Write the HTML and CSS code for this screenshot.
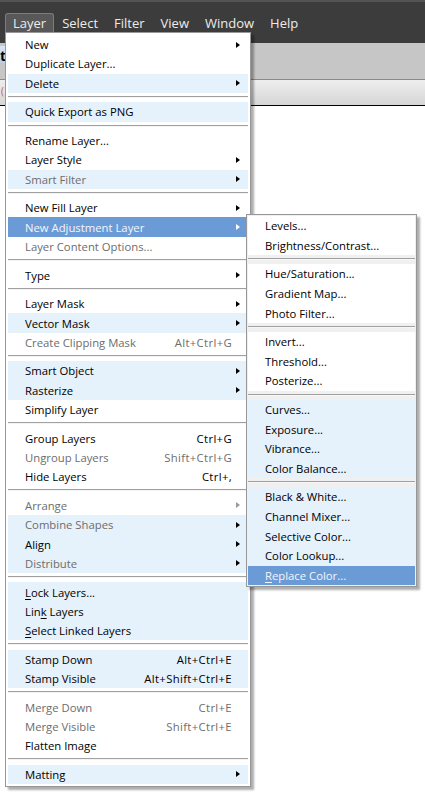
FILE: index.html
```html
<!DOCTYPE html>
<html>
<head>
<meta charset="utf-8">
<title>Layer menu</title>
<link rel="stylesheet" href="styles.css">
</head>
<body>
<div class="app">
  <div class="menubar">
    <span class="mb active">Layer</span>
    <span class="mb">Select</span>
    <span class="mb">Filter</span>
    <span class="mb">View</span>
    <span class="mb">Window</span>
    <span class="mb">Help</span>
  </div>
  <div class="docbar"><span class="doctab">t</span></div>
  <div class="optbar"><span class="optmark">(</span></div>
  <div class="canvas"></div>
</div>

<div class="menu main">
  <div class="item"><span class="label">New</span><i class="arrow"></i></div>
  <div class="item"><span class="label">Duplicate Layer...</span></div>
  <div class="item hov"><span class="label">Delete</span><i class="arrow"></i></div>
  <div class="sep"></div>
  <div class="item hov"><span class="label">Quick Export as PNG</span></div>
  <div class="sep"></div>
  <div class="item"><span class="label">Rename Layer...</span></div>
  <div class="item"><span class="label">Layer Style</span><i class="arrow"></i></div>
  <div class="item hov dis"><span class="label">Smart Filter</span><i class="arrow"></i></div>
  <div class="sep"></div>
  <div class="item"><span class="label">New Fill Layer</span><i class="arrow"></i></div>
  <div class="item sel"><span class="label">New Adjustment Layer</span><i class="arrow"></i></div>
  <div class="item dis"><span class="label">Layer Content Options...</span></div>
  <div class="sep"></div>
  <div class="item"><span class="label">Type</span><i class="arrow"></i></div>
  <div class="sep"></div>
  <div class="item"><span class="label">Layer Mask</span><i class="arrow"></i></div>
  <div class="item hov"><span class="label">Vector Mask</span><i class="arrow"></i></div>
  <div class="item dis"><span class="label">Create Clipping Mask</span><span class="key">Alt+Ctrl+G</span></div>
  <div class="sep"></div>
  <div class="item hov"><span class="label">Smart Object</span><i class="arrow"></i></div>
  <div class="item hov"><span class="label">Rasterize</span><i class="arrow"></i></div>
  <div class="item"><span class="label">Simplify Layer</span></div>
  <div class="sep"></div>
  <div class="item"><span class="label">Group Layers</span><span class="key">Ctrl+G</span></div>
  <div class="item dis"><span class="label">Ungroup Layers</span><span class="key">Shift+Ctrl+G</span></div>
  <div class="item"><span class="label">Hide Layers</span><span class="key">Ctrl+,</span></div>
  <div class="sep"></div>
  <div class="item dis"><span class="label">Arrange</span><i class="arrow dim"></i></div>
  <div class="item hov dis"><span class="label">Combine Shapes</span><i class="arrow"></i></div>
  <div class="item hov"><span class="label">Align</span><i class="arrow"></i></div>
  <div class="item hov dis"><span class="label">Distribute</span><i class="arrow"></i></div>
  <div class="sep"></div>
  <div class="item hov"><span class="label"><u>L</u>ock Layers...</span></div>
  <div class="item hov"><span class="label">Lin<u>k</u> Layers</span></div>
  <div class="item hov"><span class="label"><u>S</u>elect Linked Layers</span></div>
  <div class="sep"></div>
  <div class="item hov"><span class="label">Stamp Down</span><span class="key">Alt+Ctrl+E</span></div>
  <div class="item hov"><span class="label">Stamp Visible</span><span class="key">Alt+Shift+Ctrl+E</span></div>
  <div class="sep"></div>
  <div class="item dis"><span class="label">Merge Down</span><span class="key">Ctrl+E</span></div>
  <div class="item dis"><span class="label">Merge Visible</span><span class="key">Shift+Ctrl+E</span></div>
  <div class="item"><span class="label">Flatten Image</span></div>
  <div class="sep"></div>
  <div class="item hov"><span class="label">Matting</span><i class="arrow"></i></div>
</div>

<div class="menu sub">
  <div class="item"><span class="label">Levels...</span></div>
  <div class="item"><span class="label">Brightness/Contrast...</span></div>
  <div class="sep"></div>
  <div class="item"><span class="label">Hue/Saturation...</span></div>
  <div class="item"><span class="label">Gradient Map...</span></div>
  <div class="item"><span class="label">Photo Filter...</span></div>
  <div class="sep"></div>
  <div class="item"><span class="label">Invert...</span></div>
  <div class="item"><span class="label">Threshold...</span></div>
  <div class="item"><span class="label">Posterize...</span></div>
  <div class="sep"></div>
  <div class="item hov"><span class="label">Curves...</span></div>
  <div class="item hov"><span class="label">Exposure...</span></div>
  <div class="item hov"><span class="label">Vibrance...</span></div>
  <div class="item hov"><span class="label">Color Balance...</span></div>
  <div class="sep"></div>
  <div class="item hov"><span class="label">Black &amp; White...</span></div>
  <div class="item hov"><span class="label">Channel Mixer...</span></div>
  <div class="item hov"><span class="label">Selective Color...</span></div>
  <div class="item hov"><span class="label">Color Lookup...</span></div>
  <div class="item sel"><span class="label"><u>R</u>eplace Color...</span></div>
</div>
</body>
</html>
```

FILE: styles.css
```css
* { box-sizing: border-box; }

body {
  margin: 0;
  background: #ffffff;
  font-family: "Open Sans", "Noto Sans", sans-serif;
}

.app {
  width: 425px;
  height: 798px;
  display: flex;
  flex-direction: column;
}

.menubar {
  height: 43px;
  flex: none;
  background: #3c3c3c;
  border-top: 2px solid #545454;
  display: flex;
  align-items: flex-start;
  padding: 11px 0 0 5px;
}

.mb {
  height: 19px;
  padding: 0 7px;
  border: 1px solid transparent;
  border-bottom: none;
  border-radius: 3px 3px 0 0;
  color: #ececec;
  font-size: 13px;
  line-height: 18px;
}

.mb.active {
  background: #585858;
  border-color: #7c7c7c;
}

.docbar {
  height: 37px;
  flex: none;
  background: #c6c6c6;
  border-bottom: 1px solid #8a8a8a;
  display: flex;
  align-items: flex-start;
  padding-top: 3px;
}

.doctab {
  width: 6px;
  height: 17px;
  background: linear-gradient(#d9e6f3, #b9cfe6);
  font-size: 14px;
  font-weight: bold;
  line-height: 19px;
  color: #000;
}

.optbar {
  height: 26px;
  flex: none;
  background: linear-gradient(#eeeeee, #d6d6d6);
  border-bottom: 1px solid #000;
  padding: 5px 0 0 1px;
}

.optmark {
  display: block;
  width: 5px;
  color: #c0603a;
  font-size: 10px;
  line-height: 12px;
}

.canvas {
  flex: 1;
  background: #ffffff;
}

.menu {
  position: absolute;
  border: 1px solid #979797;
  box-shadow: 3px 3px 2px rgba(0, 0, 0, 0.32);
}

.main {
  left: 5px;
  top: 32px;
  width: 246px;
  padding: 2px;
  background: #ffffff;
  z-index: 2;
}

.sub {
  left: 246px;
  top: 214px;
  width: 171px;
  padding: 1px;
  background: #f0f0f0;
  z-index: 3;
}

.sub .item {
  background: #ffffff;
}

.item {
  height: 19.3px;
  display: flex;
  align-items: center;
  padding: 0 8px 0 17px;
  font-size: 11.3px;
  color: #000;
  white-space: nowrap;
}

.sub .item {
  height: 19.6px;
}

.label { flex: 1; }

.key {
  margin-right: 8px;
  letter-spacing: 0.35px;
}

.item u { text-decoration-thickness: 1px; text-underline-offset: 2px; }

.arrow {
  width: 0;
  height: 0;
  border-left: 4px solid #000;
  border-top: 3.5px solid transparent;
  border-bottom: 3.5px solid transparent;
}

.arrow.dim { border-left-color: #9a9a9a; }

.item.dis { color: #6d6d6d; }

.item.hov,
.sub .item.hov { background: #e5f1fb; }

.item.sel,
.sub .item.sel {
  background: #6b9bd6;
  color: #f3f6fb;
}

.item.sel .arrow { border-left-color: #ffffff; }

.sep {
  margin: 3px 0 4.37px;
  border-top: 1px solid #a0a0a0;
  border-bottom: 1px solid #f4f4f4;
}

.sub .sep {
  margin: 3px 0 4px;
  border-bottom-color: #f7f7f7;
}
```
